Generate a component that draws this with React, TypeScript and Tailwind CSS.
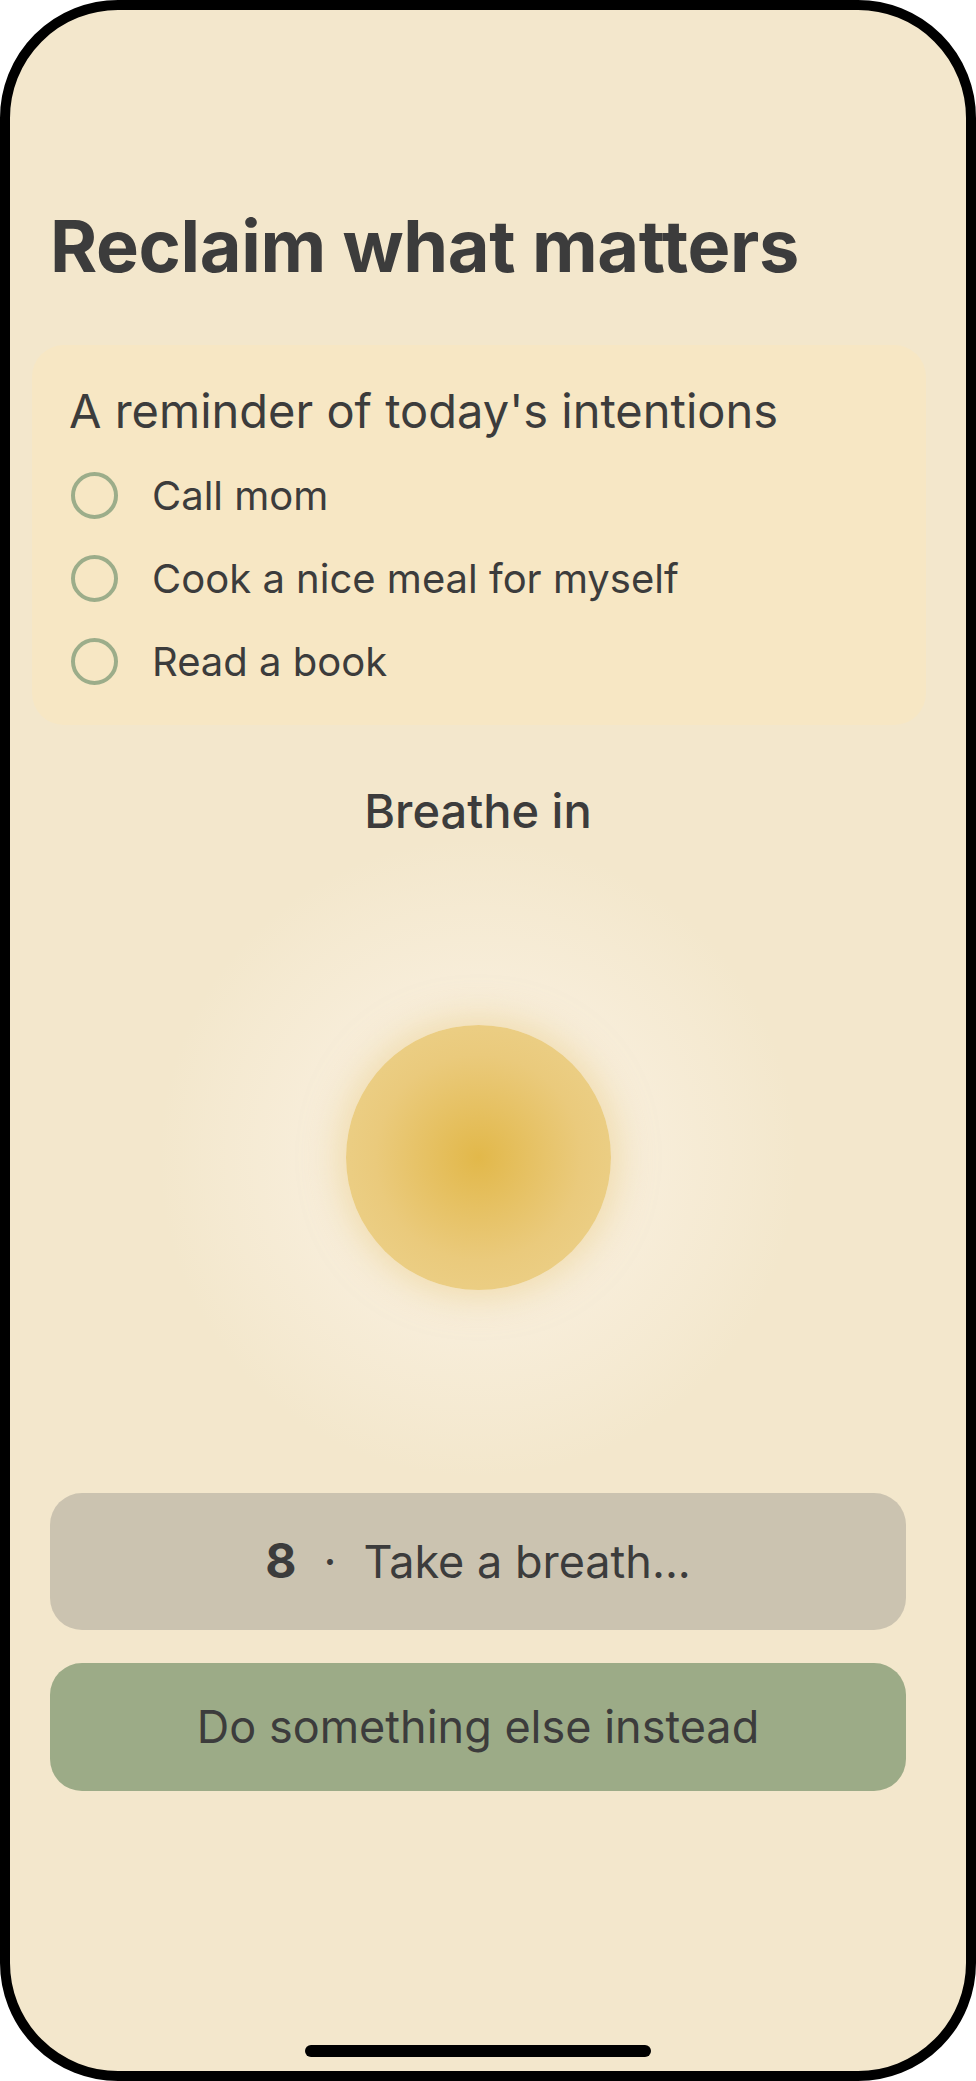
const intentions = ['Call mom', 'Cook a nice meal for myself', 'Read a book'];

function Intention({ label }: { label: string }) {
  return (
    <li className="flex items-center gap-[34px]">
      <span className="ml-[2px] h-[47px] w-[47px] shrink-0 rounded-full border-[4px] border-[#9cad8a]" />
      <span className="text-[40px] leading-none text-[#3c3c3c]">{label}</span>
    </li>
  );
}

export default function App() {
  return (
    <div className="min-h-screen bg-white" style={{ fontFamily: 'Inter, "Noto Sans", sans-serif' }}>
      <div className="flex h-[2081px] w-[976px] flex-col overflow-hidden rounded-[118px] border-[10px] border-black bg-[#f3e7cc]">
        <div className="flex flex-col pl-[40px] pr-[60px] pt-[200px]">
          <h1 className="text-[72px] font-bold leading-none tracking-[-0.35px] text-[#3c3c3c]">Reclaim what matters</h1>

          {/* Intentions card */}
          <section className="mt-[63px] ml-[-18px] mr-[-20px] rounded-[32px] bg-[#f7e7c4] pl-[37px] pr-[38px] pt-[38px] pb-[40px]">
            <h2 className="text-[47px] leading-[1.2] text-[#3c3c3c]">A reminder of today's intentions</h2>
            <ul className="mt-[33px] flex flex-col gap-[36px]">
              {intentions.map((item) => (
                <Intention key={item} label={item} />
              ))}
            </ul>
          </section>

          <p className="mt-[58px] text-center text-[47px] font-medium leading-[1.2] text-[#3c3c3c]">Breathe in</p>

          {/* Breathing orb */}
          <div className="flex h-[636px] items-center justify-center bg-[radial-gradient(circle_at_center,#f8eedb_0px,#f8eedb_150px,#f3e7cc00_320px)]">
            <div className="h-[265px] w-[265px] rounded-full bg-[radial-gradient(circle_at_center,#e2b84a_0%,#eaca7c_55%,#edd490_100%)] shadow-[0_0_36px_8px_rgba(234,204,130,0.5)]" />
          </div>

          <div className="mt-[17px] flex flex-col gap-[33px]">
            <button className="flex h-[137px] items-center justify-center gap-[27px] rounded-[32px] bg-[#cbc3b0] text-[#3c3c3c]">
              <span className="text-[48px] font-bold leading-none">8</span>
              <span className="text-[45px] leading-none">·</span>
              <span className="text-[45px] leading-none">Take a breath...</span>
            </button>
            <button className="flex h-[128px] items-center justify-center rounded-[32px] bg-[#9cab87] text-[45px] leading-none text-[#3c3c3c]">
              Do something else instead
            </button>
          </div>
        </div>

        {/* Home indicator */}
        <div className="mt-auto mb-[14px] flex justify-center pr-[20px]">
          <div className="h-[12px] w-[346px] rounded-full bg-black" />
        </div>
      </div>
    </div>
  );
}
